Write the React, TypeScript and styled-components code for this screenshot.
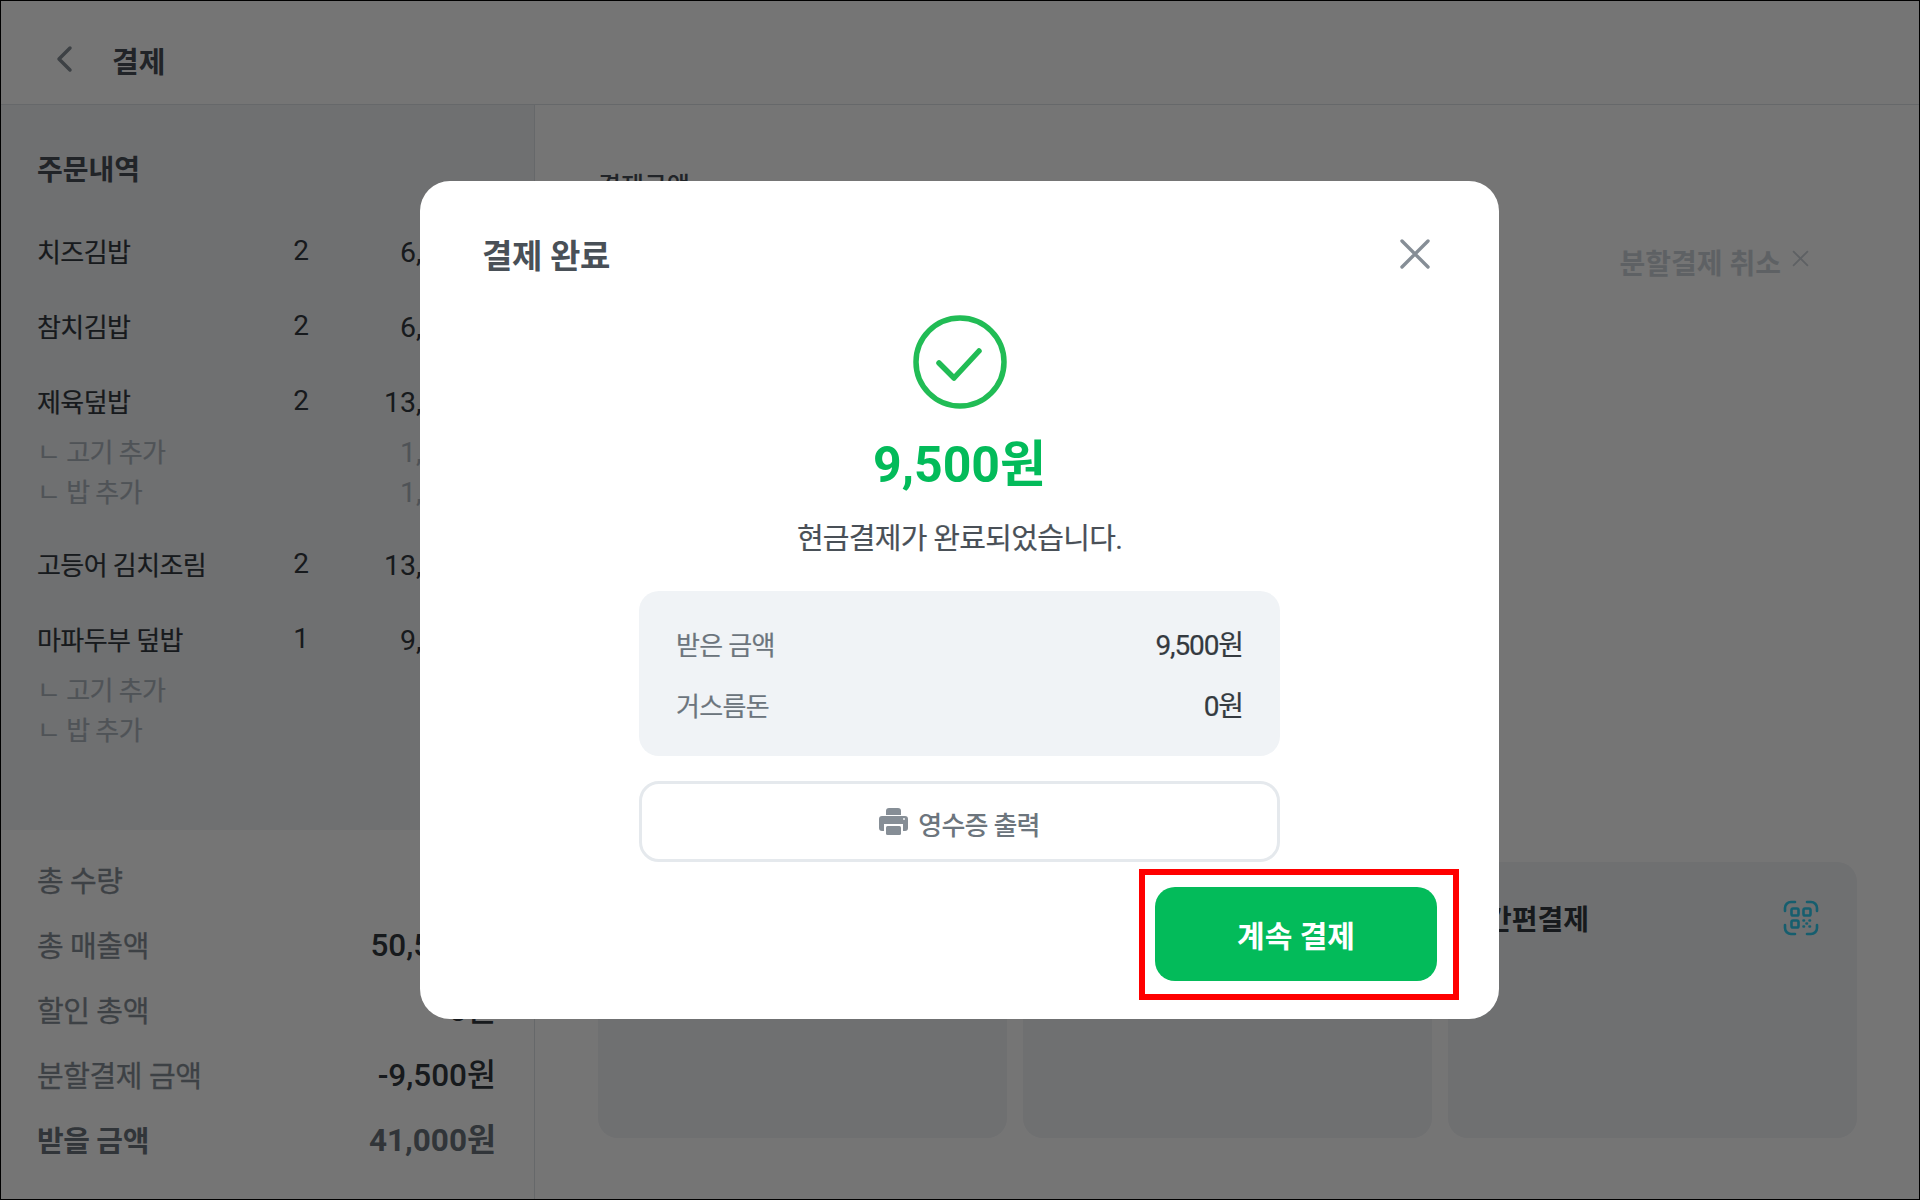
import React from "react";
import styled, { createGlobalStyle } from "styled-components";

const GlobalStyle = createGlobalStyle`
    * { box-sizing: border-box; }
    html, body { margin: 0; padding: 0; background: #fff; }
    body { font-family: Roboto, "Noto Sans CJK KR", sans-serif; color: #343a40; }
`;

const Page = styled.div`
    position: relative;
    display: flex;
    flex-direction: column;
    width: 1920px;
    height: 1200px;
    border: 1px solid #000;
    overflow: hidden;
    background: #fff;
`;

const TopBar = styled.header`
    display: flex;
    align-items: center;
    flex: 0 0 104px;
    padding: 21px 0 0 54px;
    border-bottom: 1px solid #dee2e6;
`;

const BackButton = styled.span`
    display: flex;
    width: 57px;
    margin-top: -8px;
    color: #868e96;
`;

const PageTitle = styled.h1`
    margin: 0;
    font-size: 29px;
    line-height: 40px;
    font-weight: 700;
    color: #495057;
`;

const Content = styled.div`
    display: flex;
    flex: 1;
    min-height: 0;
`;

const Sidebar = styled.aside`
    display: flex;
    flex-direction: column;
    flex: 0 0 534px;
    border-right: 1px solid #dee2e6;
`;

const OrderPanel = styled.section`
    flex: 0 0 725px;
    padding: 46px 38px 0 36px;
    background: #f1f3f6;
`;

const SectionTitle = styled.h2`
    margin: 0 0 44px;
    font-size: 28px;
    line-height: 40px;
    font-weight: 700;
    color: #495057;
`;

const OrderItem = styled.div`
    margin-bottom: 32px;
`;

const ItemRow = styled.div`
    display: grid;
    grid-template-columns: 234px 60px 1fr;
    padding-bottom: 7px;
    line-height: 36px;
    color: #343a40;
`;

const ItemName = styled.span`
    font-size: 26px;
    letter-spacing: -0.6px;
    -webkit-text-stroke: 0.2px;
`;

const ItemQty = styled.span`
    margin-top: -2px;
    font-size: 28px;
    text-align: center;
`;

const ItemPrice = styled.span`
    font-size: 28.5px;
    text-align: right;
`;

const SubList = styled.div`
    padding: 5px 0 3px;
`;

const SubRow = styled.div`
    display: flex;
    justify-content: space-between;
    line-height: 40px;
    font-size: 26px;
    letter-spacing: -0.6px;
    color: #adb5bd;
    -webkit-text-stroke: 0.2px;
`;

const SubPrice = styled.span`
    font-size: 28.5px;
    letter-spacing: 0;
    -webkit-text-stroke: 0;
`;

const SummaryPanel = styled.section`
    display: flex;
    flex-direction: column;
    gap: 25px;
    flex: 1;
    padding: 32px 38px 0 36px;
`;

const SummaryRow = styled.div<{ $strong?: boolean }>`
    display: flex;
    justify-content: space-between;
    line-height: 40px;
    font-size: 29px;
    letter-spacing: -0.4px;
    font-weight: ${({ $strong }) => ($strong ? 700 : 400)};
    color: ${({ $strong }) => ($strong ? "#6c757d" : "#868e96")};
    -webkit-text-stroke: ${({ $strong }) => ($strong ? "0" : "0.3px")};
`;

const SummaryValue = styled.span<{ $strong?: boolean }>`
    margin-top: -1px;
    font-size: 31.5px;
    letter-spacing: 0;
    font-weight: ${({ $strong }) => ($strong ? 700 : 500)};
    color: ${({ $strong }) => ($strong ? "#6c757d" : "#343a40")};
    -webkit-text-stroke: 0;
`;

const Main = styled.main`
    display: flex;
    flex-direction: column;
    flex: 1;
    padding: 62px 62px 61px 63px;
`;

const AmountLabel = styled.div`
    font-size: 25px;
    line-height: 40px;
    font-weight: 500;
    color: #495057;
`;

const CancelSplit = styled.div`
    display: flex;
    align-items: center;
    align-self: flex-end;
    gap: 11px;
    margin: 38px 48px 0 0;
    font-size: 28px;
    line-height: 40px;
    font-weight: 700;
    color: #ced4da;
`;

const CancelIcon = styled.span`
    display: flex;
    margin-top: -13px;
`;

const CardGrid = styled.div`
    display: grid;
    grid-template-columns: repeat(3, 409px);
    justify-content: space-between;
    margin-top: auto;
`;

const PayCard = styled.div`
    display: flex;
    justify-content: space-between;
    height: 276px;
    padding: 38px 38px 0 38px;
    border-radius: 20px;
    background: #f1f3f6;
`;

const PayCardTitle = styled.span`
    padding-top: 1px;
    font-size: 28px;
    line-height: 40px;
    font-weight: 700;
    color: #343a40;
`;

const Overlay = styled.div`
    position: absolute;
    inset: 0;
    display: flex;
    align-items: center;
    justify-content: center;
    padding-right: 1px;
    background: rgba(0, 0, 0, 0.54);
`;

const Modal = styled.div`
    display: flex;
    flex-direction: column;
    width: 1079px;
    height: 838px;
    border-radius: 30px;
    background: #fff;
`;

const ModalHeader = styled.div`
    display: flex;
    align-items: center;
    justify-content: space-between;
    padding: 52px 69px 0 62px;
`;

const ModalTitle = styled.h2`
    margin: 0;
    font-size: 33px;
    line-height: 48px;
    font-weight: 700;
    letter-spacing: -0.3px;
    color: #495057;
`;

const CloseButton = styled.span`
    display: flex;
    margin-top: -6px;
`;

const ModalBody = styled.div`
    display: flex;
    flex-direction: column;
    align-items: center;
    margin-top: 34px;
`;

const PaidAmount = styled.div`
    margin-top: 26px;
    font-size: 50px;
    line-height: 60px;
    font-weight: 700;
    color: #03bb5a;
`;

const Message = styled.p`
    margin: 24px 0 0;
    font-size: 29px;
    line-height: 40px;
    letter-spacing: -0.7px;
    color: #495057;
    -webkit-text-stroke: 0.2px;
`;

const InfoBox = styled.div`
    display: flex;
    flex-direction: column;
    gap: 21px;
    width: 641px;
    height: 165px;
    margin-top: 32px;
    padding: 35px 37px 0;
    border-radius: 20px;
    background: #f0f3f6;
`;

const InfoRow = styled.div`
    display: flex;
    justify-content: space-between;
    font-size: 26px;
    line-height: 40px;
    letter-spacing: -0.7px;
    color: #6c757d;
    -webkit-text-stroke: 0.2px;
`;

const InfoValue = styled.span`
    font-size: 28px;
    letter-spacing: -1.1px;
    color: #343a40;
`;

const ReceiptButton = styled.button`
    display: flex;
    align-items: center;
    justify-content: center;
    gap: 10px;
    width: 641px;
    height: 81px;
    margin-top: 25px;
    padding: 0;
    border: 3px solid #e5e9ed;
    border-radius: 20px;
    background: #fff;
    font-family: inherit;
    font-size: 26px;
    letter-spacing: -0.8px;
    font-weight: 500;
    color: #6c757d;
`;

const ReceiptLabel = styled.span`
    padding-top: 4px;
`;

const ModalFooter = styled.div`
    display: flex;
    justify-content: flex-end;
    margin-top: 7px;
    padding-right: 40px;
`;

const Highlight = styled.div`
    padding: 12px 16px 13px 10px;
    border: 6px solid #f00;
`;

const ContinueButton = styled.button`
    display: block;
    width: 282px;
    height: 94px;
    padding: 0;
    border: none;
    border-radius: 20px;
    background: #03bb5a;
    font-family: inherit;
    font-size: 30px;
    font-weight: 700;
    color: #fff;
`;

const BackIcon = () => (
    <svg width="18" height="28" viewBox="0 0 18 28" fill="none" stroke="currentColor" strokeWidth="3.5" strokeLinecap="round" strokeLinejoin="round">
        <path d="M15 3 4 14l11 11" />
    </svg>
);

const CloseIcon = () => (
    <svg width="30" height="30" viewBox="0 0 30 30" fill="none" stroke="#868e96" strokeWidth="3.4" strokeLinecap="round">
        <path d="M2 2l26 26M28 2 2 28" />
    </svg>
);

const SmallCloseIcon = () => (
    <svg width="17" height="17" viewBox="0 0 16 16" fill="none" stroke="#ced4da" strokeWidth="1.8">
        <path d="M1 1l14 14M15 1 1 15" />
    </svg>
);

const SuccessIcon = () => (
    <svg width="94" height="94" viewBox="0 0 94 94" fill="none" stroke="#21bc55" strokeWidth="5.5" strokeLinecap="round" strokeLinejoin="round">
        <circle cx="47" cy="47" r="44" />
        <path d="M26 48l15 15 25-27" />
    </svg>
);

const PrinterIcon = () => (
    <svg width="29" height="27" viewBox="0 0 29 27" fill="#868e96">
        <path d="M7 7V3a3 3 0 0 1 3-3h9a3 3 0 0 1 3 3v4z" />
        <path d="M3 8h23a3 3 0 0 1 3 3v9a3 3 0 0 1-3 3h-2v-7H5v7H3a3 3 0 0 1-3-3v-9a3 3 0 0 1 3-3z" />
        <rect x="7" y="18" width="15" height="9" rx="1.5" />
        <circle cx="25" cy="11" r="0.9" fill="#fff" />
    </svg>
);

const QrIcon = () => (
    <svg width="36" height="36" viewBox="0 0 36 36" fill="none" stroke="#30cdf0" strokeWidth="2.6" strokeLinecap="round">
        <path d="M2 11V8a6 6 0 0 1 6-6h4M24 2h4a6 6 0 0 1 6 6v3M34 25v3a6 6 0 0 1-6 6h-4M12 34H8a6 6 0 0 1-6-6v-3" />
        <rect x="8.5" y="8.5" width="7" height="7" rx="1.6" />
        <rect x="20.5" y="8.5" width="7" height="7" rx="1.6" />
        <rect x="8.5" y="20.5" width="7" height="7" rx="1.6" />
        <path d="M20.5 20.5h.5M26.5 20.5h.5M23.5 23.5h.5M20.5 26.5h.5M26.5 26.5h.5" />
    </svg>
);

type Order = { name: string; qty: number; price: string; subs?: { name: string; price: string }[] };

const orders: Order[] = [
    { name: "치즈김밥", qty: 2, price: "6,000원" },
    { name: "참치김밥", qty: 2, price: "6,000원" },
    {
        name: "제육덮밥",
        qty: 2,
        price: "13,000원",
        subs: [
            { name: "ㄴ 고기 추가", price: "1,000원" },
            { name: "ㄴ 밥 추가", price: "1,000원" },
        ],
    },
    { name: "고등어 김치조림", qty: 2, price: "13,000원" },
    {
        name: "마파두부 덮밥",
        qty: 1,
        price: "9,500원",
        subs: [
            { name: "ㄴ 고기 추가", price: "" },
            { name: "ㄴ 밥 추가", price: "" },
        ],
    },
];

const summary = [
    { label: "총 수량", value: "9개" },
    { label: "총 매출액", value: "50,500원" },
    { label: "할인 총액", value: "0원" },
    { label: "분할결제 금액", value: "-9,500원" },
];

const App = () => {
    return (
        <Page>
            <GlobalStyle />
            <TopBar>
                <BackButton><BackIcon /></BackButton>
                <PageTitle>결제</PageTitle>
            </TopBar>
            <Content>
                <Sidebar>
                    <OrderPanel>
                        <SectionTitle>주문내역</SectionTitle>
                        {orders.map((order) => (
                            <OrderItem key={order.name}>
                                <ItemRow>
                                    <ItemName>{order.name}</ItemName>
                                    <ItemQty>{order.qty}</ItemQty>
                                    <ItemPrice>{order.price}</ItemPrice>
                                </ItemRow>
                                {order.subs && (
                                    <SubList>
                                        {order.subs.map((sub) => (
                                            <SubRow key={sub.name}>
                                                <span>{sub.name}</span>
                                                <SubPrice>{sub.price}</SubPrice>
                                            </SubRow>
                                        ))}
                                    </SubList>
                                )}
                            </OrderItem>
                        ))}
                    </OrderPanel>
                    <SummaryPanel>
                        {summary.map((row) => (
                            <SummaryRow key={row.label}>
                                <span>{row.label}</span>
                                <SummaryValue>{row.value}</SummaryValue>
                            </SummaryRow>
                        ))}
                        <SummaryRow $strong>
                            <span>받을 금액</span>
                            <SummaryValue $strong>41,000원</SummaryValue>
                        </SummaryRow>
                    </SummaryPanel>
                </Sidebar>
                <Main>
                    <AmountLabel>결제금액</AmountLabel>
                    <CancelSplit>
                        분할결제 취소
                        <CancelIcon><SmallCloseIcon /></CancelIcon>
                    </CancelSplit>
                    <CardGrid>
                        <PayCard><PayCardTitle>현금결제</PayCardTitle></PayCard>
                        <PayCard><PayCardTitle>카드결제</PayCardTitle></PayCard>
                        <PayCard>
                            <PayCardTitle>간편결제</PayCardTitle>
                            <QrIcon />
                        </PayCard>
                    </CardGrid>
                </Main>
            </Content>
            <Overlay>
                <Modal>
                    <ModalHeader>
                        <ModalTitle>결제 완료</ModalTitle>
                        <CloseButton><CloseIcon /></CloseButton>
                    </ModalHeader>
                    <ModalBody>
                        <SuccessIcon />
                        <PaidAmount>9,500원</PaidAmount>
                        <Message>현금결제가 완료되었습니다.</Message>
                        <InfoBox>
                            <InfoRow>
                                <span>받은 금액</span>
                                <InfoValue>9,500원</InfoValue>
                            </InfoRow>
                            <InfoRow>
                                <span>거스름돈</span>
                                <InfoValue>0원</InfoValue>
                            </InfoRow>
                        </InfoBox>
                        <ReceiptButton>
                            <PrinterIcon />
                            <ReceiptLabel>영수증 출력</ReceiptLabel>
                        </ReceiptButton>
                    </ModalBody>
                    <ModalFooter>
                        <Highlight>
                            <ContinueButton>계속 결제</ContinueButton>
                        </Highlight>
                    </ModalFooter>
                </Modal>
            </Overlay>
        </Page>
    );
};

export default App;
